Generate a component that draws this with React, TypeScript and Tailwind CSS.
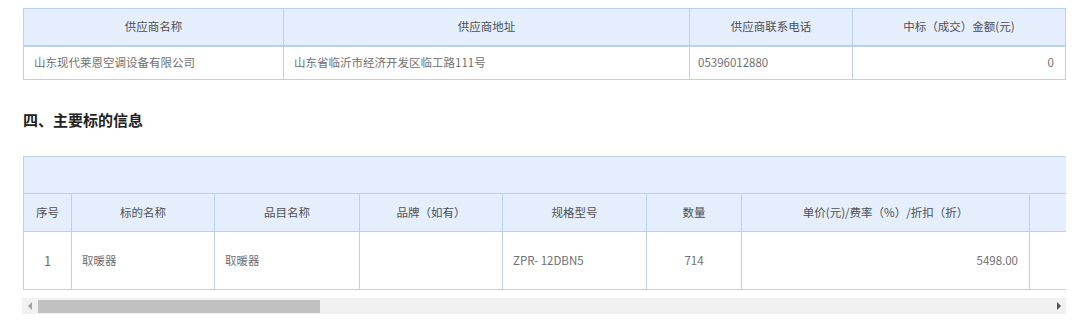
const cjk = { fontFamily: '"Noto Sans CJK SC", "Liberation Sans", sans-serif' }

const suppliers = [
  {
    name: '山东现代莱恩空调设备有限公司',
    address: '山东省临沂市经济开发区临工路111号',
    phone: '05396012880',
    amount: '0',
  },
]

const items = [
  {
    no: '1',
    subject: '取暖器',
    category: '取暖器',
    brand: '',
    model: 'ZPR- 12DBN5',
    qty: '714',
    price: '5498.00',
  },
]

const th = 'border border-[#bad1e6] bg-[#e4eefc] font-normal text-[#4f4f4f]'
const td = 'border border-[#bad1e6] text-[#707070]'

function SupplierTable() {
  return (
    <table className="w-[1042px] table-fixed border-collapse text-[11.5px]">
      <colgroup>
        <col className="w-[260px]" />
        <col className="w-[406px]" />
        <col className="w-[163px]" />
        <col className="w-[213px]" />
      </colgroup>
      <thead>
        <tr className="h-[37px] border-b-2 border-[#bad1e6]">
          <th className={th}>供应商名称</th>
          <th className={th}>供应商地址</th>
          <th className={th}>供应商联系电话</th>
          <th className={th}>中标（成交）金额(元)</th>
        </tr>
      </thead>
      <tbody>
        {suppliers.map((s) => (
          <tr key={s.name} className="h-[34px]">
            <td className={`${td} px-[10px]`}>{s.name}</td>
            <td className={`${td} px-[10px]`}>{s.address}</td>
            <td className={`${td} px-[8px]`}>{s.phone}</td>
            <td className={`${td} px-[11px] text-right`}>{s.amount}</td>
          </tr>
        ))}
      </tbody>
    </table>
  )
}

function ItemTable() {
  return (
    <div className="w-[1043px] overflow-hidden">
      <table className="w-[1126px] table-fixed border-collapse text-[11.5px]">
        <colgroup>
          <col className="w-[48px]" />
          <col className="w-[143px]" />
          <col className="w-[145px]" />
          <col className="w-[143px]" />
          <col className="w-[144px]" />
          <col className="w-[95px]" />
          <col className="w-[288px]" />
          <col className="w-[120px]" />
        </colgroup>
        <thead>
          <tr className="h-[37px]">
            <th colSpan={8} className={th}></th>
          </tr>
          <tr className="h-[38px]">
            <th className={th}>序号</th>
            <th className={th}>标的名称</th>
            <th className={th}>品目名称</th>
            <th className={th}>品牌（如有）</th>
            <th className={th}>规格型号</th>
            <th className={th}>数量</th>
            <th className={th}>单价(元)/费率（%）/折扣（折）</th>
            <th className={th}></th>
          </tr>
        </thead>
        <tbody>
          {items.map((it) => (
            <tr key={it.no} className="h-[58px]">
              <td className={`${td} text-center text-[13px] text-[#555]`}>{it.no}</td>
              <td className={`${td} px-[10px]`}>{it.subject}</td>
              <td className={`${td} px-[10px]`}>{it.category}</td>
              <td className={`${td} px-[10px]`}>{it.brand}</td>
              <td className={`${td} px-[10px]`}>{it.model}</td>
              <td className={`${td} text-center`}>{it.qty}</td>
              <td className={`${td} px-[11px] text-right`}>{it.price}</td>
              <td className={td}></td>
            </tr>
          ))}
        </tbody>
      </table>
    </div>
  )
}

function ScrollBar() {
  return (
    <div className="mt-[8px] flex h-[16px] w-[1044px] -ml-px items-center bg-[#f1f1f1]">
      <div className="flex w-[16px] justify-center">
        <svg width="5" height="8" viewBox="0 0 5 8">
          <path d="M4 0 L0 4 L4 8 Z" fill="#a3a3a3" />
        </svg>
      </div>
      <div className="h-[13px] w-[282px] bg-[#c1c1c1]" />
      <div className="flex-1" />
      <div className="flex w-[16px] justify-center">
        <svg width="5" height="8" viewBox="0 0 5 8">
          <path d="M1 0 L5 4 L1 8 Z" fill="#505050" />
        </svg>
      </div>
    </div>
  )
}

export default function App() {
  return (
    <div className="h-[325px] w-[1080px] bg-white pl-[23px] pt-[8px]" style={cjk}>
      <SupplierTable />
      <h3 className="mt-[30px] text-[15px] leading-[20px] font-bold text-[#222]">四、主要标的信息</h3>
      <div className="mt-[26px]">
        <ItemTable />
        <ScrollBar />
      </div>
    </div>
  )
}
